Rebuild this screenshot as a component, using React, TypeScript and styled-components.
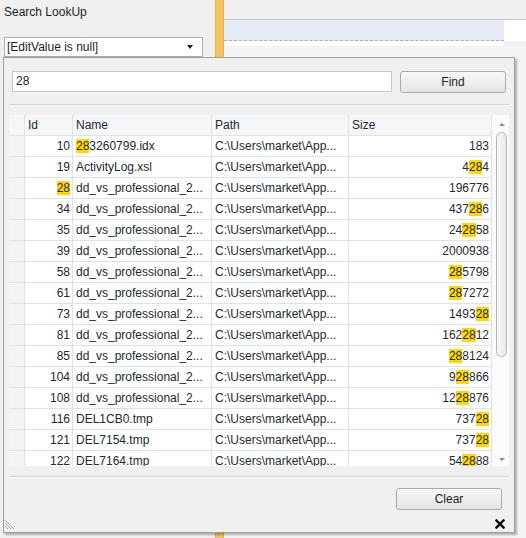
import React from "react";
import styled, { createGlobalStyle } from "styled-components";

const GlobalStyle = createGlobalStyle`
  html, body { margin: 0; padding: 0; background: #f0f0f0; }
  body {
    font-family: "Liberation Sans", Arial, sans-serif;
    font-size: 12px;
    color: #1e1e1e;
  }
`;

const Page = styled.div`
  position: relative;
  width: 526px;
  height: 538px;
  display: flex;
  overflow: hidden;
  background: #f0f0f0;
`;

const LeftPane = styled.div`
  width: 215px;
  padding: 5px 0 0 4px;
  box-sizing: border-box;
`;

const Label = styled.div`
  height: 15px;
  line-height: 15px;
  color: #1e1e1e;
`;

const Combo = styled.div`
  margin-top: 17px;
  width: 199px;
  height: 20px;
  box-sizing: border-box;
  background: #fff;
  border: 1px solid #abadb3;
  display: flex;
  align-items: center;
  justify-content: space-between;
  padding: 0 9px 0 2px;
`;

const ComboArrow = styled.span`
  width: 0;
  height: 0;
  border-left: 3.5px solid transparent;
  border-right: 3.5px solid transparent;
  border-top: 4px solid #1e1e1e;
`;

const YellowBar = styled.div`
  width: 7px;
  background: #f2c45e;
  border-left: 1px solid #e4b451;
  border-right: 1px solid #e4b451;
`;

const RightPane = styled.div`
  flex: 1;
  display: flex;
  flex-direction: column;
`;

const TopStrip = styled.div`
  height: 19px;
  border-bottom: 1px solid #c4c4c4;
`;

const DesignRow = styled.div`
  display: flex;
  background: #fff;
`;

const DesignBlock = styled.div`
  width: 280px;
  height: 20px;
  background: #e5ecf6;
  border-bottom: 1px dashed #a8b1bf;
`;

const WhiteGap = styled.div`
  height: 5px;
  width: 280px;
  background: #fff;
`;

const GrayArea = styled.div`
  flex: 1;
  background: #f4f4f4;
`;

const Popup = styled.div`
  position: absolute;
  left: 3px;
  top: 57px;
  width: 512px;
  height: 476px;
  box-sizing: border-box;
  border: 1px solid #9e9e9e;
  background: #f0f0f0;
  box-shadow: 2px 2px 2px rgba(0, 0, 0, 0.28);
  display: flex;
  flex-direction: column;
`;

const SearchRow = styled.div`
  display: flex;
  gap: 8px;
  padding: 13px 8px 0 8px;
`;

const SearchBox = styled.div`
  width: 380px;
  height: 21px;
  box-sizing: border-box;
  background: #fff;
  border: 1px solid #c5c7cb;
  padding-left: 3px;
  line-height: 19px;
`;

const Button = styled.div<{ $right?: number }>`
  width: 106px;
  height: 22px;
  box-sizing: border-box;
  border: 1px solid #a9a9a9;
  border-radius: 3px;
  background: linear-gradient(#f8f8f8, #e4e4e4);
  display: flex;
  align-items: center;
  justify-content: center;
  color: #1e1e1e;
  margin-right: ${(p) => p.$right ?? 0}px;
`;

const Separator = styled.div<{ $top: number }>`
  margin: ${(p) => p.$top}px 5px 0;
  height: 0;
  border-top: 1px solid #d3d3d3;
  border-bottom: 1px solid #fbfbfb;
`;

const Grid = styled.div`
  margin: 9px 5px 0;
  height: 351px;
  display: flex;
  background: #fff;
  overflow: hidden;
`;

const Table = styled.div`
  width: 483px;
  display: grid;
  grid-template-columns: 16px 48px 139px 137px 143px;
  grid-auto-rows: 21px;
  align-content: start;
  color: #222a33;
`;

const Cell = styled.div<{ $align?: "left" | "right"; $kind?: "head" | "ind" | "data" }>`
  box-sizing: border-box;
  border-right: 1px solid #dfe2e6;
  border-bottom: 1px solid #dfe2e6;
  line-height: 20px;
  white-space: nowrap;
  overflow: hidden;
  text-align: ${(p) => p.$align ?? "left"};
  padding: ${(p) => (p.$align === "right" ? "0 2px 0 0" : "0 0 0 3px")};
  background: ${(p) =>
    p.$kind === "head" ? "#f5f6f7" : p.$kind === "ind" ? "#f3f4f6" : "#fff"};
`;

const Hl = styled.span`
  background: #ffd800;
`;

const Scrollbar = styled.div`
  width: 17px;
  display: flex;
  flex-direction: column;
  align-items: center;
  padding: 8px 0 5px;
  box-sizing: border-box;
  background: #fbfbfb;
`;

const Arrow = styled.span<{ $down?: boolean }>`
  width: 0;
  height: 0;
  margin-left: 2px;
  border-left: 3px solid transparent;
  border-right: 3px solid transparent;
  ${(p) => (p.$down ? "border-top: 3px solid #8c8c8c;" : "border-bottom: 3px solid #8c8c8c;")}
`;

const Thumb = styled.div`
  margin: 6px 0 0 2px;
  width: 11px;
  height: 225px;
  box-sizing: border-box;
  border: 1px solid #b4b4b4;
  border-radius: 6px;
  background: linear-gradient(to right, #f7f7f7, #e8e8e8);
`;

const Spacer = styled.div`
  flex: 1;
`;

const ButtonRow = styled.div`
  display: flex;
  justify-content: flex-end;
  margin-top: 10px;
`;

const Footer = styled.div`
  flex: 1;
  display: flex;
  align-items: flex-end;
  justify-content: space-between;
  padding: 0 9px 3px 1px;
`;

const rows: [string, string, string][] = [
  ["10", "283260799.idx", "183"],
  ["19", "ActivityLog.xsl", "4284"],
  ["28", "dd_vs_professional_2...", "196776"],
  ["34", "dd_vs_professional_2...", "437286"],
  ["35", "dd_vs_professional_2...", "242858"],
  ["39", "dd_vs_professional_2...", "2000938"],
  ["58", "dd_vs_professional_2...", "285798"],
  ["61", "dd_vs_professional_2...", "287272"],
  ["73", "dd_vs_professional_2...", "149328"],
  ["81", "dd_vs_professional_2...", "1622812"],
  ["85", "dd_vs_professional_2...", "288124"],
  ["104", "dd_vs_professional_2...", "928866"],
  ["108", "dd_vs_professional_2...", "1228876"],
  ["116", "DEL1CB0.tmp", "73728"],
  ["121", "DEL7154.tmp", "73728"],
  ["122", "DEL7164.tmp", "542888"],
];

const term = "28";

function Mark({ text }: { text: string }) {
  const i = text.indexOf(term);
  if (i < 0) return <>{text}</>;
  return (
    <>
      {text.slice(0, i)}
      <Hl>{term}</Hl>
      {text.slice(i + term.length)}
    </>
  );
}

export default function App() {
  return (
    <>
      <GlobalStyle />
      <Page>
        <LeftPane>
          <Label>Search LookUp</Label>
          <Combo>
            <span>[EditValue is null]</span>
            <ComboArrow />
          </Combo>
        </LeftPane>
        <YellowBar />
        <RightPane>
          <TopStrip />
          <DesignRow>
            <DesignBlock />
          </DesignRow>
          <WhiteGap />
          <GrayArea />
        </RightPane>

        <Popup>
          <SearchRow>
            <SearchBox>28</SearchBox>
            <Button>Find</Button>
          </SearchRow>
          <Separator $top={11} />
          <Grid>
            <Table>
              <Cell $kind="head" />
              <Cell $kind="head">Id</Cell>
              <Cell $kind="head">Name</Cell>
              <Cell $kind="head">Path</Cell>
              <Cell $kind="head">Size</Cell>
              {rows.map(([id, name, size]) => (
                <React.Fragment key={id}>
                  <Cell $kind="ind" />
                  <Cell $align="right">
                    <Mark text={id} />
                  </Cell>
                  <Cell>
                    <Mark text={name} />
                  </Cell>
                  <Cell>C:\Users\market\App...</Cell>
                  <Cell $align="right">
                    <Mark text={size} />
                  </Cell>
                </React.Fragment>
              ))}
            </Table>
            <Scrollbar>
              <Arrow />
              <Thumb />
              <Spacer />
              <Arrow $down />
            </Scrollbar>
          </Grid>
          <Separator $top={10} />
          <ButtonRow>
            <Button $right={12}>Clear</Button>
          </ButtonRow>
          <Footer>
            <svg width="11" height="11" viewBox="0 0 11 11">
              <g stroke="#a8a8a8" strokeWidth="1">
                <line x1="0" y1="2" x2="9" y2="11" />
                <line x1="0" y1="5" x2="6" y2="11" />
                <line x1="0" y1="8" x2="3" y2="11" />
              </g>
            </svg>
            <svg width="10" height="10" viewBox="0 0 10 10">
              <g stroke="#111" strokeWidth="2.4" strokeLinecap="square">
                <line x1="1.5" y1="1.5" x2="8.5" y2="8.5" />
                <line x1="8.5" y1="1.5" x2="1.5" y2="8.5" />
              </g>
            </svg>
          </Footer>
        </Popup>
      </Page>
    </>
  );
}
